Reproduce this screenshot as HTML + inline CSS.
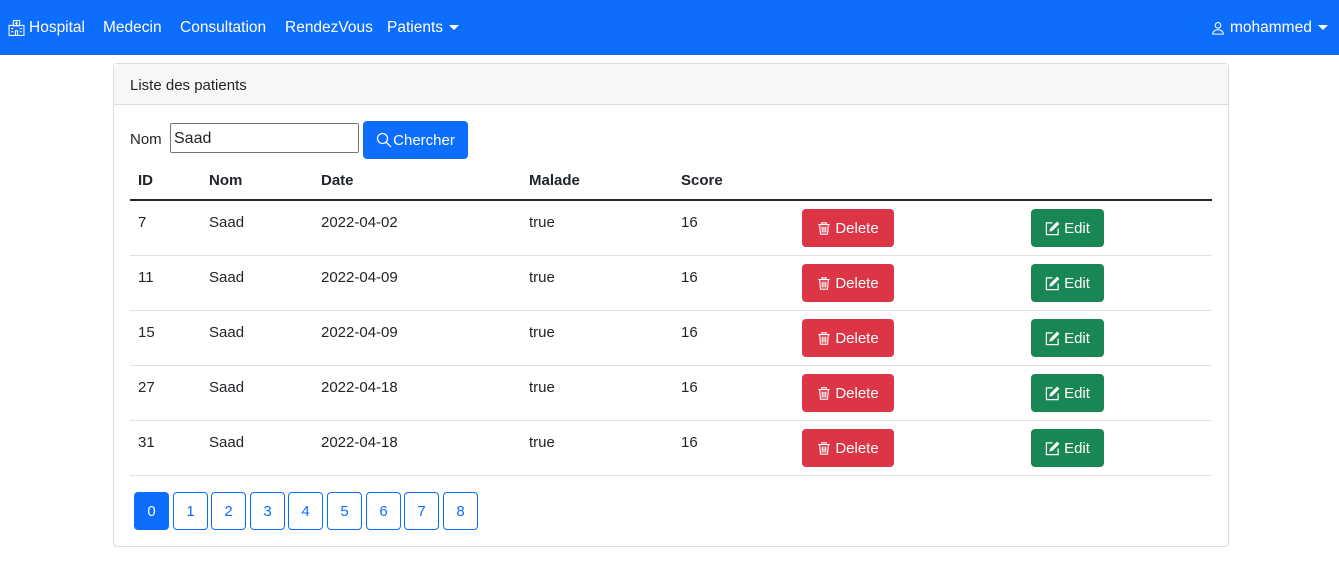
<!DOCTYPE html>
<html><head><meta charset="utf-8"><style>
*{box-sizing:border-box;margin:0;padding:0}
body{width:1339px;height:587px;background:#fff;font-family:"Liberation Sans",sans-serif;color:#212529;font-size:15px;position:relative;overflow:hidden}
.nav{position:absolute;left:0;top:0;width:1339px;height:55px;background:#0d6efd;color:#fff;font-size:15.5px}
.nav span{position:absolute;top:19px}
.caret{display:inline-block;border-top:5px solid #fff;border-left:5px solid transparent;border-right:5px solid transparent;vertical-align:middle;margin-left:6px}
.card{position:absolute;left:113px;top:63px;width:1116px;height:484px;border:1px solid #dcdcdc;border-radius:4px}
.ch{height:41px;background:#f7f7f7;border-bottom:1px solid #dcdcdc;padding:13px 16px;font-size:15px}
.a{position:absolute}
.btn{position:absolute;color:#fff;border-radius:4px;font-size:15px;display:flex;align-items:center;justify-content:center;gap:4px}
.del{background:#dc3545;width:92px;height:38px;left:802px}
.edt{background:#198754;width:73px;height:38px;left:1031px}
.line{position:absolute;left:130px;width:1082px;height:1px;background:#dee2e6}
.pg{position:absolute;top:492px;width:35px;height:38px;border:1px solid #0d6efd;color:#0d6efd;border-radius:4px;display:flex;align-items:center;justify-content:center;font-size:15px}
</style></head><body>
<div class="nav">
<svg class="a" style="left:8px;top:19px" width="17" height="17" viewBox="0 0 16 16" fill="none" stroke="#fff" stroke-width="1"><rect x="1" y="6" width="14" height="9.5"/><rect x="5" y="1.5" width="6" height="5"/><path d="M8 2.5v3M6.5 4h3M3 9h2M3 12h2M11 9h2M11 12h2M7 11h2v4.5H7z"/></svg>
<span style="left:29px">Hospital</span><span style="left:103px">Medecin</span><span style="left:180px">Consultation</span><span style="left:285px">RendezVous</span><span style="left:387px">Patients<i class="caret"></i></span>
<svg class="a" style="left:1211px;top:21px" width="14" height="14" viewBox="0 0 16 16" fill="none" stroke="#fff" stroke-width="1.2"><circle cx="8" cy="5" r="3.2"/><path d="M2 15c0-3.5 3-5 6-5s6 1.5 6 5z"/></svg>
<span style="left:1230px">mohammed<i class="caret"></i></span>
</div>
<div class="card"><div class="ch">Liste des patients</div></div>
<span class="a" style="left:130px;top:131px">Nom</span>
<div class="a" style="left:170px;top:123px;width:189px;height:30px;border:1px solid #767676;border-radius:2px;padding:6px 3px;font-size:16px">Saad</div>
<div class="btn" style="background:#0d6efd;left:363px;top:121px;width:105px;height:38px;gap:1px"><svg width="16" height="16" viewBox="0 0 16 16" fill="none" stroke="#fff" stroke-width="1.3"><circle cx="6.5" cy="6.5" r="5"/><path d="M10.2 10.2 15 15"/></svg>Chercher</div>
<div class="a" style="top:172px;font-weight:bold;left:138px">ID</div>
<div class="a" style="top:172px;font-weight:bold;left:209px">Nom</div>
<div class="a" style="top:172px;font-weight:bold;left:321px">Date</div>
<div class="a" style="top:172px;font-weight:bold;left:529px">Malade</div>
<div class="a" style="top:172px;font-weight:bold;left:681px">Score</div>
<div class="line" style="top:199px;height:2px;background:#212529"></div>
<div id="rows"></div>
<script>
var d=[[7,"2022-04-02"],[11,"2022-04-09"],[15,"2022-04-09"],[27,"2022-04-18"],[31,"2022-04-18"]],h="";
var trash='<svg width="14" height="15" viewBox="0 0 16 16" fill="none" stroke="#fff" stroke-width="1.3"><path d="M1.5 3.5h13M5.5 3.5V1.5h5v2M3 3.5l1 11h8l1-11M6 6v6.5M8 6v6.5M10 6v6.5"/></svg>';
var pen='<svg width="15" height="15" viewBox="0 0 16 16" fill="none" stroke="#fff" stroke-width="1.3"><path d="M8 2H1.5v12.5H14V8"/><path d="M13 1.5l1.5 1.5-7 7-2 .5.5-2z" fill="#fff"/></svg>';
d.forEach(function(r,i){var y=200+i*55;
h+='<div class="a" style="top:'+(y+14)+'px;left:138px">'+r[0]+'</div><div class="a" style="top:'+(y+14)+'px;left:209px">Saad</div><div class="a" style="top:'+(y+14)+'px;left:321px">'+r[1]+'</div><div class="a" style="top:'+(y+14)+'px;left:529px">true</div><div class="a" style="top:'+(y+14)+'px;left:681px">16</div>';
h+='<div class="btn del" style="top:'+(y+9)+'px">'+trash+'Delete</div><div class="btn edt" style="top:'+(y+9)+'px">'+pen+'Edit</div><div class="line" style="top:'+(y+55)+'px"></div>';});
for(var k=0;k<9;k++){h+='<div class="pg" style="left:'+Math.round(134+k*38.6)+'px;'+(k==0?'background:#0d6efd;color:#fff':'')+'">'+k+'</div>';}
document.getElementById("rows").innerHTML=h;
</script>
</body></html>
